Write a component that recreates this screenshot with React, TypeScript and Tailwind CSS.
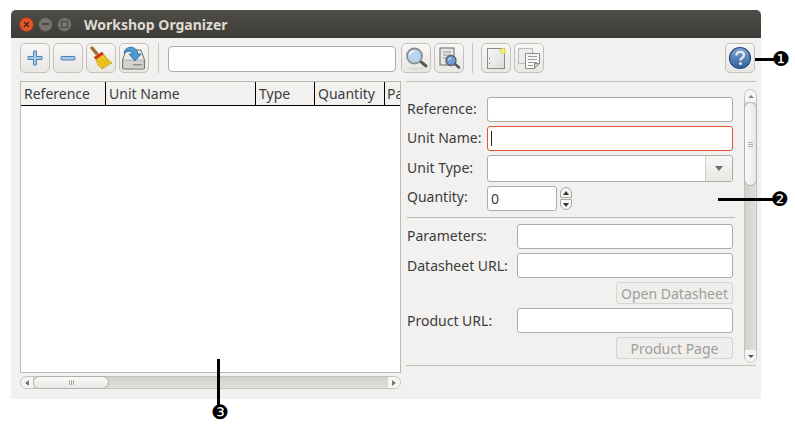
import React from "react";

const font = { fontFamily: '"Noto Sans", sans-serif' };

function Btn({ children, className = "" }: { children: React.ReactNode; className?: string }) {
  return (
    <div className={"w-[30px] h-[30px] shrink-0 rounded-[5px] border border-[#c4c1bb] bg-gradient-to-b from-[#f8f7f6] to-[#e9e7e4] flex items-center justify-center " + className}>
      {children}
    </div>
  );
}

function Sep({ className = "" }: { className?: string }) {
  return <div className={"w-px h-[30px] bg-[#c9c6c1] shrink-0 " + className} />;
}

function Plus() {
  return (
    <svg width="16" height="16" viewBox="0 0 16 16">
      <path d="M6.500 1h3v5.500H15v3H9.500V15h-3V9.500H1v-3h5.500z" fill="#a9c8e6" stroke="#4e83b8" strokeWidth="1" />
    </svg>
  );
}
function Minus() {
  return (
    <svg width="16" height="16" viewBox="0 0 16 16">
      <rect x="1" y="6.500" width="14" height="3.500" rx="0.500" fill="#a9c8e6" stroke="#4e83b8" />
    </svg>
  );
}
function Broom() {
  return (
    <svg width="26" height="26" viewBox="0 0 26 26">
      <path d="M4 3l5 6" stroke="#a8702f" strokeWidth="3.500" strokeLinecap="round" />
      <path d="M6 12l8-5 4 5-4 1-5 2z" fill="#f0c419" stroke="#b08a12" strokeWidth="0.500" />
      <path d="M6 12.500l8-5.500 1.500 2-8 5.500z" fill="#d8232a" />
      <path d="M8 15l7-5 9 8-4 2-4 3-2 1-4-4z" fill="#f2c81f" stroke="#b08a12" strokeWidth="0.600" />
      <path d="M11 16l5 7M14 14l5 7M17 13l4 6" stroke="#c79a14" strokeWidth="0.800" />
    </svg>
  );
}
function Disk() {
  return (
    <svg width="26" height="26" viewBox="0 0 26 26">
      <path d="M5 5h15l3.500 10v8a1 1 0 0 1-1 1h-20a1 1 0 0 1-1-1v-8z" fill="#e9e9e6" stroke="#6d6f6b" strokeWidth="1" />
      <rect x="2" y="15" width="21" height="8.500" fill="#d2d3cf" stroke="#8c8e8a" strokeWidth="0.500" />
      <rect x="12" y="19" width="9" height="1.500" fill="#8c8e8a" />
      <path d="M3 8c1-5 6-7 10-5 2 1 3.500 3 3.500 6H20l-6 7-6-7h3.500c0-3-4-4-8.500-1z" fill="#4d9bd5" stroke="#1f5f99" strokeWidth="0.800" />
    </svg>
  );
}
function Lens() {
  return (
    <svg width="26" height="26" viewBox="0 0 26 26">
      <ellipse cx="13" cy="23.500" rx="9" ry="1.500" fill="#dcdad6" />
      <path d="M17 16l6 5" stroke="#54575b" strokeWidth="3" strokeLinecap="round" />
      <circle cx="11.500" cy="11" r="7.500" fill="#bcd3ec" stroke="#8a8f95" strokeWidth="1.800" />
      <path d="M6.500 10a5 5 0 0 1 5-4" stroke="#ffffff" strokeWidth="1.500" fill="none" />
    </svg>
  );
}
function DocLens() {
  return (
    <svg width="26" height="26" viewBox="0 0 26 26">
      <rect x="4" y="3" width="14" height="17" fill="#e8e8e6" stroke="#66686a" />
      <path d="M7 7h8M7 10h8M7 13h4" stroke="#8f9192" />
      <path d="M19 19l4 3.500" stroke="#54575b" strokeWidth="2.500" strokeLinecap="round" />
      <circle cx="15" cy="15.500" r="5" fill="#6f9dd2" stroke="#5c6066" strokeWidth="1.400" />
      <path d="M12.500 15.500a2.500 2.500 0 0 1 2.500-2.500" stroke="#dceaf7" fill="none" />
    </svg>
  );
}
function NewNote() {
  return (
    <svg width="26" height="26" viewBox="0 0 26 26">
      <defs>
        <linearGradient id="ng" x1="0" y1="0" x2="1" y2="1">
          <stop offset="0" stopColor="#f6f6f5" />
          <stop offset="1" stopColor="#dcdcda" />
        </linearGradient>
      </defs>
      <rect x="4.500" y="3.500" width="17" height="20" fill="url(#ng)" stroke="#8a8c8a" />
      <path d="M6.500 13v1M6.500 18v1" stroke="#777" />
      <circle cx="20" cy="6" r="2.500" fill="#f6ef86" stroke="#e8d64a" />
    </svg>
  );
}
function CopyDoc() {
  return (
    <svg width="26" height="26" viewBox="0 0 26 26">
      <rect x="2.500" y="3.500" width="14" height="15" fill="#ececea" stroke="#bdbdbb" />
      <path d="M9.500 8.500h14v10l-5 5h-9z" fill="#f6f6f4" stroke="#8a8c8a" />
      <path d="M12 11.500h9M12 14.500h9M12 17.500h9M12 20.500h5" stroke="#9a9c9a" />
      <path d="M18.500 23.500v-5h5z" fill="#c9cac8" stroke="#8a8c8a" />
    </svg>
  );
}
function Help() {
  return (
    <svg width="24" height="24" viewBox="0 0 24 24">
      <defs>
        <linearGradient id="hg" x1="0" y1="0" x2="0" y2="1">
          <stop offset="0" stopColor="#86a6d0" />
          <stop offset="1" stopColor="#2f5f9e" />
        </linearGradient>
      </defs>
      <circle cx="12" cy="12" r="10.500" fill="url(#hg)" stroke="#234c84" strokeWidth="1.200" />
      <path d="M8.500 9.500c0-5 7.500-4.500 7.500-.5 0 3-3.500 3-3.500 5.500" fill="none" stroke="#e4ebf4" strokeWidth="2.400" />
      <circle cx="12.500" cy="17.500" r="1.500" fill="#e4ebf4" />
    </svg>
  );
}

function Input({ className = "", children }: { className?: string; children?: React.ReactNode }) {
  return (
    <div className={"h-[25px] bg-white border border-[#aeaba6] rounded-[3px] flex items-center " + className}>{children}</div>
  );
}

function Label({ children, className = "" }: { children: React.ReactNode; className?: string }) {
  return <div className={"text-[14px] leading-[20px] text-[#3c3c3c] shrink-0 " + className}>{children}</div>;
}

function HeaderCell({ w, children }: { w: string; children: React.ReactNode }) {
  return (
    <div className={"h-full border-r border-black px-[3px] flex items-center overflow-hidden whitespace-nowrap text-[14px] text-[#3c3c3c] shrink-0 " + w}>
      {children}
    </div>
  );
}

function Grip({ vertical }: { vertical?: boolean }) {
  return vertical ? (
    <div className="flex flex-col gap-[1px]">
      <div className="w-[5px] h-px bg-[#b3b1ad]" />
      <div className="w-[5px] h-px bg-[#b3b1ad]" />
      <div className="w-[5px] h-px bg-[#b3b1ad]" />
    </div>
  ) : (
    <div className="flex gap-[1px]">
      <div className="w-px h-[5px] bg-[#a8a6a2]" />
      <div className="w-px h-[5px] bg-[#a8a6a2]" />
      <div className="w-px h-[5px] bg-[#a8a6a2]" />
    </div>
  );
}

function Callout({ n, className }: { n: string; className: string }) {
  return (
    <div
      className={"absolute text-black text-[20px] leading-[20px] " + className}
      style={{ fontFamily: '"DejaVu Sans", sans-serif' }}
    >
      {n}
    </div>
  );
}

export default function App() {
  return (
    <div className="relative w-[795px] h-[425px] bg-white overflow-hidden pt-[10px] pl-[11px]" style={font}>
      <div className="w-[750px] h-[389px] bg-[#f2f1f0] flex flex-col">
        {/* Title bar */}
        <div className="h-[28px] rounded-t-[5px] bg-gradient-to-b from-[#4f4d47] to-[#3c3b37] flex items-center pl-[8px] shrink-0">
          <div className="w-[15px] h-[15px] rounded-full bg-[#e2562d] border border-[#8f3a20] flex items-center justify-center">
            <svg width="7" height="7" viewBox="0 0 7 7"><path d="M1 1l5 5M6 1l-5 5" stroke="#4a2015" strokeWidth="1.200" /></svg>
          </div>
          <div className="w-[15px] h-[15px] rounded-full bg-[#75736c] border border-[#4c4a45] ml-[4px] flex items-center justify-center">
            <div className="w-[7px] h-[1.500px] bg-[#45443f]" />
          </div>
          <div className="w-[15px] h-[15px] rounded-full bg-[#75736c] border border-[#4c4a45] ml-[4px] flex items-center justify-center">
            <div className="w-[7px] h-[7px] border border-[#45443f]" />
          </div>
          <div className="ml-[12px] text-[14px] font-bold text-[#dfdbd2] whitespace-nowrap">Workshop Organizer</div>
        </div>

        {/* Toolbar */}
        <div className="h-[38px] flex items-center pl-[9px] pr-[6px] shrink-0 pt-[2px]">
          <Btn><Plus /></Btn>
          <Btn className="ml-[3px]"><Minus /></Btn>
          <Btn className="ml-[3px]"><Broom /></Btn>
          <Btn className="ml-[3px]"><Disk /></Btn>
          <Sep className="ml-[9px]" />
          <div className="w-[228px] h-[26px] ml-[9px] mt-[2px] bg-white border border-[#aeaba6] rounded-[4px] shrink-0" />
          <Btn className="ml-[5px]"><Lens /></Btn>
          <Btn className="ml-[3px]"><DocLens /></Btn>
          <Sep className="ml-[8px]" />
          <Btn className="ml-[8px]"><NewNote /></Btn>
          <Btn className="ml-[3px]"><CopyDoc /></Btn>
          <div className="flex-1" />
          <Btn className="border-[#a9a6a1]"><Help /></Btn>
        </div>

        {/* Body */}
        <div className="flex-1 flex pl-[9px] pt-[5px] min-h-0">
          {/* Left: table */}
          <div className="w-[381px] flex flex-col shrink-0">
            <div className="h-[292px] border border-[#bcb9b3] bg-white flex flex-col">
              <div className="h-[24px] border-b border-black bg-[#f2f1f0] flex shrink-0 overflow-hidden">
                <HeaderCell w="w-[85px]">Reference</HeaderCell>
                <HeaderCell w="w-[150px]">Unit Name</HeaderCell>
                <HeaderCell w="w-[59px]">Type</HeaderCell>
                <HeaderCell w="w-[70px]">Quantity</HeaderCell>
                <div className="pl-[2px] text-[14px] text-[#3c3c3c] flex items-center overflow-hidden flex-1 whitespace-nowrap">Pa</div>
              </div>
            </div>
            {/* Horizontal scrollbar */}
            <div className="mt-[3px] h-[13px] rounded-full border border-[#c4c2bd] bg-gradient-to-b from-[#d2d1ce] to-[#e0dfdc] flex items-center">
              <div className="w-[12px] h-full rounded-l-full bg-[#f6f5f4] flex items-center justify-center">
                <div className="w-0 h-0 border-y-[3px] border-y-transparent border-r-[4px] border-r-[#7a7875]" />
              </div>
              <div className="w-[76px] h-[13px] rounded-full border border-[#b3b1ac] bg-gradient-to-b from-[#fafaf9] to-[#e9e8e6] flex items-center justify-center">
                <Grip />
              </div>
              <div className="flex-1" />
              <div className="w-[12px] h-full rounded-r-full bg-[#f6f5f4] flex items-center justify-center">
                <div className="w-0 h-0 border-y-[3px] border-y-transparent border-l-[4px] border-l-[#7a7875]" />
              </div>
            </div>
          </div>

          {/* Right: form */}
          <div className="ml-[5px] w-[350px] h-[285px] border-t border-b border-[#c4c1bc] flex shrink-0">
            <div className="w-[338px] pl-[1px] pt-[15px] flex flex-col shrink-0">
              <div className="flex items-center h-[25px]">
                <Label className="w-[80px] -mt-[2px]">Reference:</Label>
                <Input className="w-[246px]" />
              </div>
              <div className="flex items-center h-[25px] mt-[4px]">
                <Label className="w-[80px] -mt-[2px]">Unit Name:</Label>
                <Input className="w-[246px] !border-[#e0562a] pl-[3px]">
                  <div className="w-px h-[15px] bg-[#222]" />
                </Input>
              </div>
              <div className="flex items-center h-[27px] mt-[4px]">
                <Label className="w-[80px] -mt-[2px]">Unit Type:</Label>
                <div className="w-[246px] h-[27px] bg-white border border-[#aeaba6] rounded-[3px] flex">
                  <div className="flex-1" />
                  <div className="w-[27px] border-l border-[#cfccc7] bg-gradient-to-b from-[#f8f7f6] to-[#e9e7e4] flex items-center justify-center rounded-r-[3px]">
                    <div className="w-0 h-0 border-x-[4px] border-x-transparent border-t-[5px] border-t-[#6f6d6a]" />
                  </div>
                </div>
              </div>
              <div className="flex items-center h-[25px] mt-[4px]">
                <Label className="w-[80px] -mt-[3px]">Quantity:</Label>
                <Input className="w-[70px] pl-[3px]">
                  <span className="text-[14px] text-[#3c3c3c] leading-none">0</span>
                </Input>
                <div className="ml-[3px] flex flex-col gap-[1px]">
                  <div className="w-[12px] h-[11px] rounded-t-full border border-[#a9a6a1] bg-[#f6f5f4] flex items-center justify-center">
                    <div className="w-0 h-0 border-x-[3px] border-x-transparent border-b-[4px] border-b-[#333]" />
                  </div>
                  <div className="w-[12px] h-[11px] rounded-b-full border border-[#a9a6a1] bg-[#f6f5f4] flex items-center justify-center">
                    <div className="w-0 h-0 border-x-[3px] border-x-transparent border-t-[4px] border-t-[#333]" />
                  </div>
                </div>
              </div>
              <div className="h-px bg-[#bdbab5] mt-[6px] w-[328px]" />
              <div className="flex items-center h-[25px] mt-[6px]">
                <Label className="w-[110px] -mt-[2px]">Parameters:</Label>
                <Input className="w-[216px]" />
              </div>
              <div className="flex items-center h-[25px] mt-[4px]">
                <Label className="w-[110px]">Datasheet URL:</Label>
                <Input className="w-[216px]" />
              </div>
              <div className="flex justify-end mt-[4px] w-[326px]">
                <div className="w-[117px] h-[22px] border border-[#d6d4d0] rounded-[3px] bg-[#efeeec] text-[14px] text-[#a09d99] flex items-center justify-center">Open Datasheet</div>
              </div>
              <div className="flex items-center h-[25px] mt-[4px]">
                <Label className="w-[110px]">Product URL:</Label>
                <Input className="w-[216px]" />
              </div>
              <div className="flex justify-end mt-[4px] w-[326px]">
                <div className="w-[117px] h-[22px] border border-[#d6d4d0] rounded-[3px] bg-[#efeeec] text-[14px] text-[#a09d99] flex items-center justify-center">Product Page</div>
              </div>
            </div>

            {/* Vertical scrollbar */}
            <div className="mt-[7px] w-[13px] h-[274px] rounded-full border border-[#c4c2bd] bg-gradient-to-r from-[#d2d1ce] to-[#e0dfdc] flex flex-col shrink-0">
              <div className="h-[12px] rounded-t-full bg-[#f6f5f4] flex items-center justify-center shrink-0">
                <div className="w-0 h-0 border-x-[3px] border-x-transparent border-b-[3px] border-b-[#8a8885]" />
              </div>
              <div className="h-[84px] -mx-px rounded-full border border-[#b3b1ac] bg-gradient-to-r from-[#fafaf9] to-[#e9e8e6] flex items-center justify-center shrink-0">
                <Grip vertical />
              </div>
              <div className="flex-1" />
              <div className="h-[12px] rounded-b-full bg-[#f6f5f4] flex items-center justify-center shrink-0">
                <div className="w-0 h-0 border-x-[3px] border-x-transparent border-t-[3px] border-t-[#555]" />
              </div>
            </div>
          </div>
        </div>
      </div>

      {/* Callouts */}
      <div className="absolute left-[755px] top-[58px] w-[20px] h-[3px] bg-black" />
      <Callout n="❶" className="left-[772px] top-[49px]" />
      <div className="absolute left-[718px] top-[198px] w-[56px] h-[3px] bg-black" />
      <Callout n="❷" className="left-[771px] top-[189px]" />
      <div className="absolute left-[217px] top-[359px] w-[3px] h-[46px] bg-black" />
      <Callout n="❸" className="left-[211px] top-[402px]" />
    </div>
  );
}
